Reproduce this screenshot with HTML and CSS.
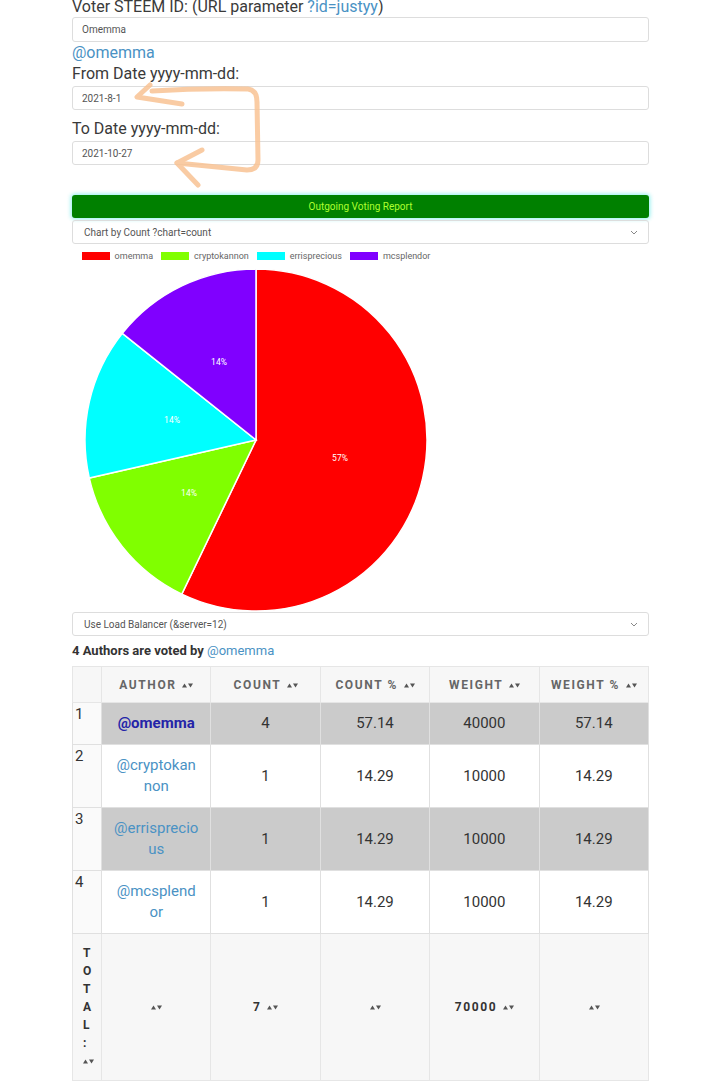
FILE: index.html
```html
<!DOCTYPE html>
<html lang="en">

<head>
    <meta charset="UTF-8">
    <meta name="viewport" content="width=device-width, initial-scale=1.0">
    <title>Outgoing Voting Report</title>
    <link rel="stylesheet" href="styles.css">
</head>

<body>
    <div class="container">
        <label class="label first">Voter STEEM ID: (URL parameter <a href="#">?id=justyy</a>)</label>
        <input class="field" type="text" value="Omemma">
        <a class="user" href="#">@omemma</a>
        <label class="label">From Date yyyy-mm-dd:</label>
        <input class="field" type="text" value="2021-8-1">
        <label class="label spaced">To Date yyyy-mm-dd:</label>
        <input class="field" type="text" value="2021-10-27">

        <div class="report">Outgoing Voting Report</div>
        <div class="select">
            <span>Chart by Count ?chart=count</span>
            <svg width="8" height="5" viewBox="0 0 8 5"><path d="M1 1 L4 4 L7 1" fill="none" stroke="#888" stroke-width="1"/></svg>
        </div>

        <div class="chart">
            <div class="legend">
                <div class="legend-item"><span class="swatch red"></span>omemma</div>
                <div class="legend-item"><span class="swatch green"></span>cryptokannon</div>
                <div class="legend-item"><span class="swatch cyan"></span>errisprecious</div>
                <div class="legend-item"><span class="swatch purple"></span>mcsplendor</div>
            </div>
            <svg class="pie" width="368" height="342" viewBox="0 0 368 342">
                <g stroke="#fff" stroke-width="1.5">
                    <path d="M184 171 L184 0 A171 171 0 1 1 109.81 325.07 Z" fill="#ff0000"/>
                    <path d="M184 171 L109.81 325.07 A171 171 0 0 1 17.29 209.05 Z" fill="#80ff00"/>
                    <path d="M184 171 L17.29 209.05 A171 171 0 0 1 50.31 64.38 Z" fill="#00ffff"/>
                    <path d="M184 171 L50.31 64.38 A171 171 0 0 1 184 0 Z" fill="#8000ff"/>
                </g>
                <g class="pie-label" fill="#fff" text-anchor="middle">
                    <text x="268" y="192">57%</text>
                    <text x="117" y="227">14%</text>
                    <text x="100" y="154">14%</text>
                    <text x="147" y="96">14%</text>
                </g>
            </svg>
        </div>

        <div class="select">
            <span>Use Load Balancer (&amp;server=12)</span>
            <svg width="8" height="5" viewBox="0 0 8 5"><path d="M1 1 L4 4 L7 1" fill="none" stroke="#888" stroke-width="1"/></svg>
        </div>

        <h4 class="summary">4 Authors are voted by <a href="#">@omemma</a></h4>

        <table class="votes">
            <colgroup>
                <col class="num-col">
                <col><col><col><col><col>
            </colgroup>
            <thead>
                <tr>
                    <th></th>
                    <th>Author <svg class="sort" width="11" height="5" viewBox="0 0 11 5"><path d="M0 4.5 L2.5 0.5 L5 4.5Z M6 0.5 L11 0.5 L8.5 4.5Z"/></svg></th>
                    <th>Count <svg class="sort" width="11" height="5" viewBox="0 0 11 5"><path d="M0 4.5 L2.5 0.5 L5 4.5Z M6 0.5 L11 0.5 L8.5 4.5Z"/></svg></th>
                    <th>Count % <svg class="sort" width="11" height="5" viewBox="0 0 11 5"><path d="M0 4.5 L2.5 0.5 L5 4.5Z M6 0.5 L11 0.5 L8.5 4.5Z"/></svg></th>
                    <th>Weight <svg class="sort" width="11" height="5" viewBox="0 0 11 5"><path d="M0 4.5 L2.5 0.5 L5 4.5Z M6 0.5 L11 0.5 L8.5 4.5Z"/></svg></th>
                    <th>Weight % <svg class="sort" width="11" height="5" viewBox="0 0 11 5"><path d="M0 4.5 L2.5 0.5 L5 4.5Z M6 0.5 L11 0.5 L8.5 4.5Z"/></svg></th>
                </tr>
            </thead>
            <tbody>
                <tr class="odd">
                    <td class="num">1</td>
                    <td><a class="author current" href="#">@omemma</a></td>
                    <td>4</td>
                    <td>57.14</td>
                    <td>40000</td>
                    <td>57.14</td>
                </tr>
                <tr>
                    <td class="num">2</td>
                    <td><a class="author" href="#">@cryptokannon</a></td>
                    <td>1</td>
                    <td>14.29</td>
                    <td>10000</td>
                    <td>14.29</td>
                </tr>
                <tr class="odd">
                    <td class="num">3</td>
                    <td><a class="author" href="#">@errisprecious</a></td>
                    <td>1</td>
                    <td>14.29</td>
                    <td>10000</td>
                    <td>14.29</td>
                </tr>
                <tr>
                    <td class="num">4</td>
                    <td><a class="author" href="#">@mcsplendor</a></td>
                    <td>1</td>
                    <td>14.29</td>
                    <td>10000</td>
                    <td>14.29</td>
                </tr>
            </tbody>
            <tfoot>
                <tr>
                    <th class="total">TOTAL: <svg class="sort" width="11" height="5" viewBox="0 0 11 5"><path d="M0 4.5 L2.5 0.5 L5 4.5Z M6 0.5 L11 0.5 L8.5 4.5Z"/></svg></th>
                    <th><svg class="sort" width="11" height="5" viewBox="0 0 11 5"><path d="M0 4.5 L2.5 0.5 L5 4.5Z M6 0.5 L11 0.5 L8.5 4.5Z"/></svg></th>
                    <th>7 <svg class="sort" width="11" height="5" viewBox="0 0 11 5"><path d="M0 4.5 L2.5 0.5 L5 4.5Z M6 0.5 L11 0.5 L8.5 4.5Z"/></svg></th>
                    <th><svg class="sort" width="11" height="5" viewBox="0 0 11 5"><path d="M0 4.5 L2.5 0.5 L5 4.5Z M6 0.5 L11 0.5 L8.5 4.5Z"/></svg></th>
                    <th>70000 <svg class="sort" width="11" height="5" viewBox="0 0 11 5"><path d="M0 4.5 L2.5 0.5 L5 4.5Z M6 0.5 L11 0.5 L8.5 4.5Z"/></svg></th>
                    <th><svg class="sort" width="11" height="5" viewBox="0 0 11 5"><path d="M0 4.5 L2.5 0.5 L5 4.5Z M6 0.5 L11 0.5 L8.5 4.5Z"/></svg></th>
                </tr>
            </tfoot>
        </table>
    </div>

    <!-- hand drawn arrows over the date fields -->
    <svg class="scribble" width="720" height="200" viewBox="0 0 720 200">
        <g fill="none" stroke="#f9c394" stroke-width="5" stroke-linecap="round" stroke-linejoin="round" opacity="0.85">
            <path d="M150 85 L137 97 L182 104"/>
            <path d="M152 91 Q200 88 248 89 Q257 90 257 102 L258 160 Q258 170 247 170 L177 163"/>
            <path d="M202 150 L177 163 L198 185"/>
        </g>
    </svg>
</body>

</html>
```

FILE: styles.css
```css
* {
    margin: 0;
    padding: 0;
    box-sizing: border-box;
}

body {
    font-family: Roboto, "Liberation Sans", sans-serif;
    color: #333;
    background-color: #fff;
    position: relative;
}

a {
    color: #4a92c4;
    text-decoration: none;
}

.container {
    width: 577px;
    margin: -3px 0 0 72px;
    display: flex;
    flex-direction: column;
}

.label {
    display: block;
    font-size: 16px;
    line-height: 20px;
    margin-top: 1px;
    color: #3a3a3a;
}

.label.first {
    margin-top: 0;
}

.label.spaced {
    margin-top: 9px;
}

.field {
    display: block;
    width: 100%;
    height: 24px;
    margin-top: 2px;
    padding: 0 9px;
    border: 1px solid #ddd;
    border-radius: 3px;
    font-family: Roboto, "Liberation Sans", sans-serif;
    font-size: 10px;
    color: #555;
    background-color: #fff;
}

.label.first + .field {
    height: 25px;
    margin-top: 0;
}

.user {
    font-size: 16px;
    line-height: 20px;
    margin-top: 1px;
}

.report {
    margin-top: 30px;
    height: 23px;
    display: flex;
    align-items: center;
    justify-content: center;
    background-color: #008000;
    color: #adff2f;
    font-size: 10px;
    border-radius: 3px;
    box-shadow: 0 0 4px 1px rgba(0, 220, 220, 0.45);
}

.select {
    height: 24px;
    margin-top: 2px;
    padding: 0 10px 0 11px;
    display: flex;
    align-items: center;
    justify-content: space-between;
    border: 1px solid #ddd;
    border-radius: 3px;
    font-size: 10px;
    color: #555;
}

.chart {
    width: 368px;
    display: flex;
    flex-direction: column;
    align-items: center;
}

.legend {
    margin-top: 6px;
    height: 12px;
    display: flex;
    align-items: center;
    gap: 8px;
    font-size: 9px;
    color: #666;
}

.legend-item {
    display: flex;
    align-items: center;
    gap: 5px;
}

.swatch {
    width: 28px;
    height: 8px;
}

.swatch.red {
    background-color: #ff0000;
}

.swatch.green {
    background-color: #80ff00;
}

.swatch.cyan {
    background-color: #00ffff;
}

.swatch.purple {
    background-color: #8000ff;
}

.pie {
    margin-top: 7px;
    display: block;
}

.pie-label {
    font-family: Roboto, "Liberation Sans", sans-serif;
    font-size: 8.5px;
}

.chart + .select {
    margin-top: 1px;
}

.summary {
    margin-top: 6px;
    font-size: 13px;
    line-height: 18px;
    font-weight: bold;
    color: #333;
}

.summary a {
    font-weight: normal;
}

.votes {
    margin-top: 6px;
    width: 577px;
    table-layout: fixed;
    border-collapse: collapse;
    border: 1px solid #ddd;
}

.votes .num-col {
    width: 29px;
}

.votes th {
    font-size: 12px;
    font-weight: bold;
    letter-spacing: 1.6px;
    text-transform: uppercase;
    color: #666;
    text-align: center;
    padding: 10px 4px;
    height: 36px;
    background-color: #f7f7f7;
    border: 1px solid #e6e6e6;
}

.votes td {
    font-size: 15px;
    line-height: 21px;
    text-align: center;
    vertical-align: middle;
    padding: 10px 12px;
    border: 1px solid #e0e0e0;
    color: #333;
}

.votes .odd td {
    background-color: #cbcbcb;
}

.votes td.num,
.votes .odd td.num {
    text-align: left;
    vertical-align: top;
    padding: 1px 2px;
    background-color: #fafafa;
}

.author {
    word-break: break-all;
}

.author.current {
    font-weight: bold;
    color: #2424a8;
}

.sort {
    fill: #555;
    vertical-align: middle;
    margin-left: 1px;
}

.votes tfoot th {
    color: #333;
    height: auto;
    line-height: 18px;
    padding: 10px 4px;
}

.votes tfoot th.total {
    text-align: left;
    word-break: break-all;
    line-break: anywhere;
    padding: 10px 8px 10px 10px;
}

.votes tfoot th.total .sort {
    margin-left: 0;
}

.scribble {
    position: absolute;
    top: 0;
    left: 0;
    pointer-events: none;
}
```
